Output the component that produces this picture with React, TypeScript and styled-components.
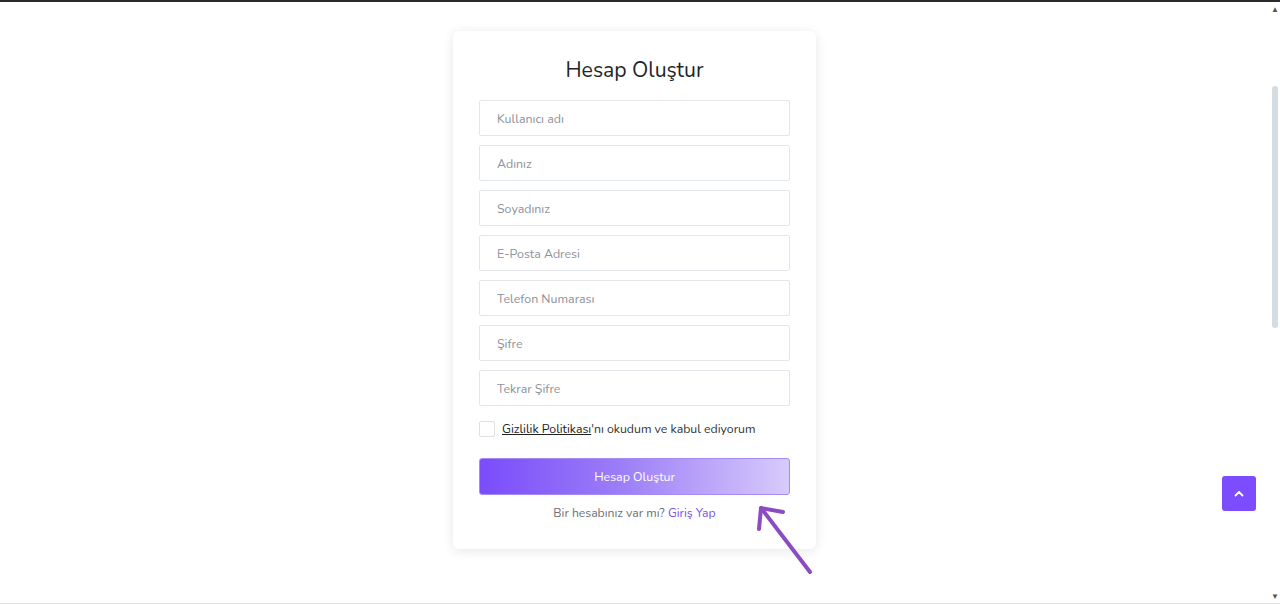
import React from "react";
import styled, { createGlobalStyle } from "styled-components";

const Global = createGlobalStyle`
  html, body { margin: 0; padding: 0; background: #ffffff; }
  body { font-family: "Nunito", Lato, "Open Sans", sans-serif; overflow: hidden; }
  * { box-sizing: border-box; }
`;

const Page = styled.div`
  height: 604px;
  border-top: 2px solid #2b2b2b;
  border-bottom: 1px solid #e2e2e2;
  display: flex;
  justify-content: center;
  align-items: flex-start;
  padding: 29px 11px 0 0;
  position: relative;
`;

const Card = styled.form`
  width: 363px;
  background: #fff;
  border-radius: 6px;
  box-shadow: 0 2px 12px rgba(0, 0, 0, 0.1);
  padding: 25px 26px 28px;
  display: flex;
  flex-direction: column;
`;

const Title = styled.h1`
  margin: 1px 0 17px;
  font-size: 21.2px;
  line-height: 26px;
  font-weight: 400;
  color: #212529;
  text-align: center;
`;

const Fields = styled.div`
  display: flex;
  flex-direction: column;
  gap: 9px;
`;

const Input = styled.input`
  height: 36px;
  width: 100%;
  border: 1px solid #e3e6ea;
  border-radius: 2px;
  padding: 0 17px;
  font-family: inherit;
  font-size: 12.4px;
  color: #333;
  outline: none;
  &::placeholder { color: #8e929a; }
`;

const CheckRow = styled.label`
  margin-top: 15px;
  display: flex;
  align-items: center;
  gap: 7px;
  font-size: 12.3px;
  color: #333;
  height: 16px;
`;

const Box = styled.span`
  width: 16px;
  height: 16px;
  border: 1px solid #dcdfe3;
  border-radius: 2px;
  background: #fff;
  flex: none;
`;

const PolicyLink = styled.a`
  color: #222;
  text-decoration: underline;
`;

const Submit = styled.button`
  margin-top: 21px;
  height: 37px;
  border: 1px solid #a58cf5;
  border-radius: 3px;
  background: linear-gradient(90deg, #7a4cfb 0%, #9b7df7 45%, #d7cbfb 100%);
  color: #fff;
  font-family: inherit;
  font-size: 12.4px;
`;

const Footer = styled.p`
  margin: 10px 0 0;
  text-align: center;
  font-size: 12.2px;
  line-height: 16px;
  color: #6c6f75;
`;

const Login = styled.a`
  color: #7a4cf0;
  text-decoration: none;
`;

const ToTop = styled.button`
  position: absolute;
  left: 1222px;
  top: 474px;
  width: 34px;
  height: 35px;
  border: none;
  border-radius: 3px;
  background: #7c4dff;
  display: flex;
  align-items: center;
  justify-content: center;
  padding: 0;
`;

const ScrollTrack = styled.div`
  position: absolute;
  right: 0;
  top: 0;
  bottom: 0;
  width: 10px;
`;

const Thumb = styled.div`
  position: absolute;
  left: 2px;
  top: 84px;
  width: 6px;
  height: 242px;
  border-radius: 3px;
  background: #d5dce2;
`;

const ArrowUp = styled.span`
  position: absolute;
  top: 4px;
  left: 1px;
  font-size: 8px;
  color: #555;
  line-height: 1;
`;
const ArrowDown = styled(ArrowUp)`
  top: auto;
  bottom: 2px;
`;

const Annotation = styled.svg`
  position: absolute;
  left: 750px;
  top: 498px;
  overflow: visible;
`;

export default function App() {
  return (
    <>
      <Global />
      <Page>
        <Card onSubmit={(e) => e.preventDefault()}>
          <Title>Hesap Oluştur</Title>
          <Fields>
            <Input placeholder="Kullanıcı adı" />
            <Input placeholder="Adınız" />
            <Input placeholder="Soyadınız" />
            <Input placeholder="E-Posta Adresi" />
            <Input placeholder="Telefon Numarası" />
            <Input placeholder="Şifre" type="password" />
            <Input placeholder="Tekrar Şifre" type="password" />
          </Fields>
          <CheckRow>
            <Box />
            <span>
              <PolicyLink>Gizlilik Politikası</PolicyLink>'nı okudum ve kabul ediyorum
            </span>
          </CheckRow>
          <Submit type="submit">Hesap Oluştur</Submit>
          <Footer>
            Bir hesabınız var mı? <Login>Giriş Yap</Login>
          </Footer>
        </Card>
        <ToTop aria-label="Yukarı">
          <svg width="10" height="7" viewBox="0 0 10 7">
            <path d="M1.5 5.5 L5 2 L8.5 5.5" stroke="#fff" strokeWidth="1.8" fill="none" strokeLinecap="round" strokeLinejoin="round" />
          </svg>
        </ToTop>
        <ScrollTrack>
          <ArrowUp>▲</ArrowUp>
          <Thumb />
          <ArrowDown>▼</ArrowDown>
        </ScrollTrack>
        <Annotation width="70" height="80" viewBox="0 0 70 80">
          <g stroke="#8b4cc2" strokeWidth="4" strokeLinecap="round" strokeLinejoin="round" fill="none">
            <path d="M60 72 L11 8" />
            <path d="M33 12 L11 8 L9 29" />
          </g>
        </Annotation>
      </Page>
    </>
  );
}
